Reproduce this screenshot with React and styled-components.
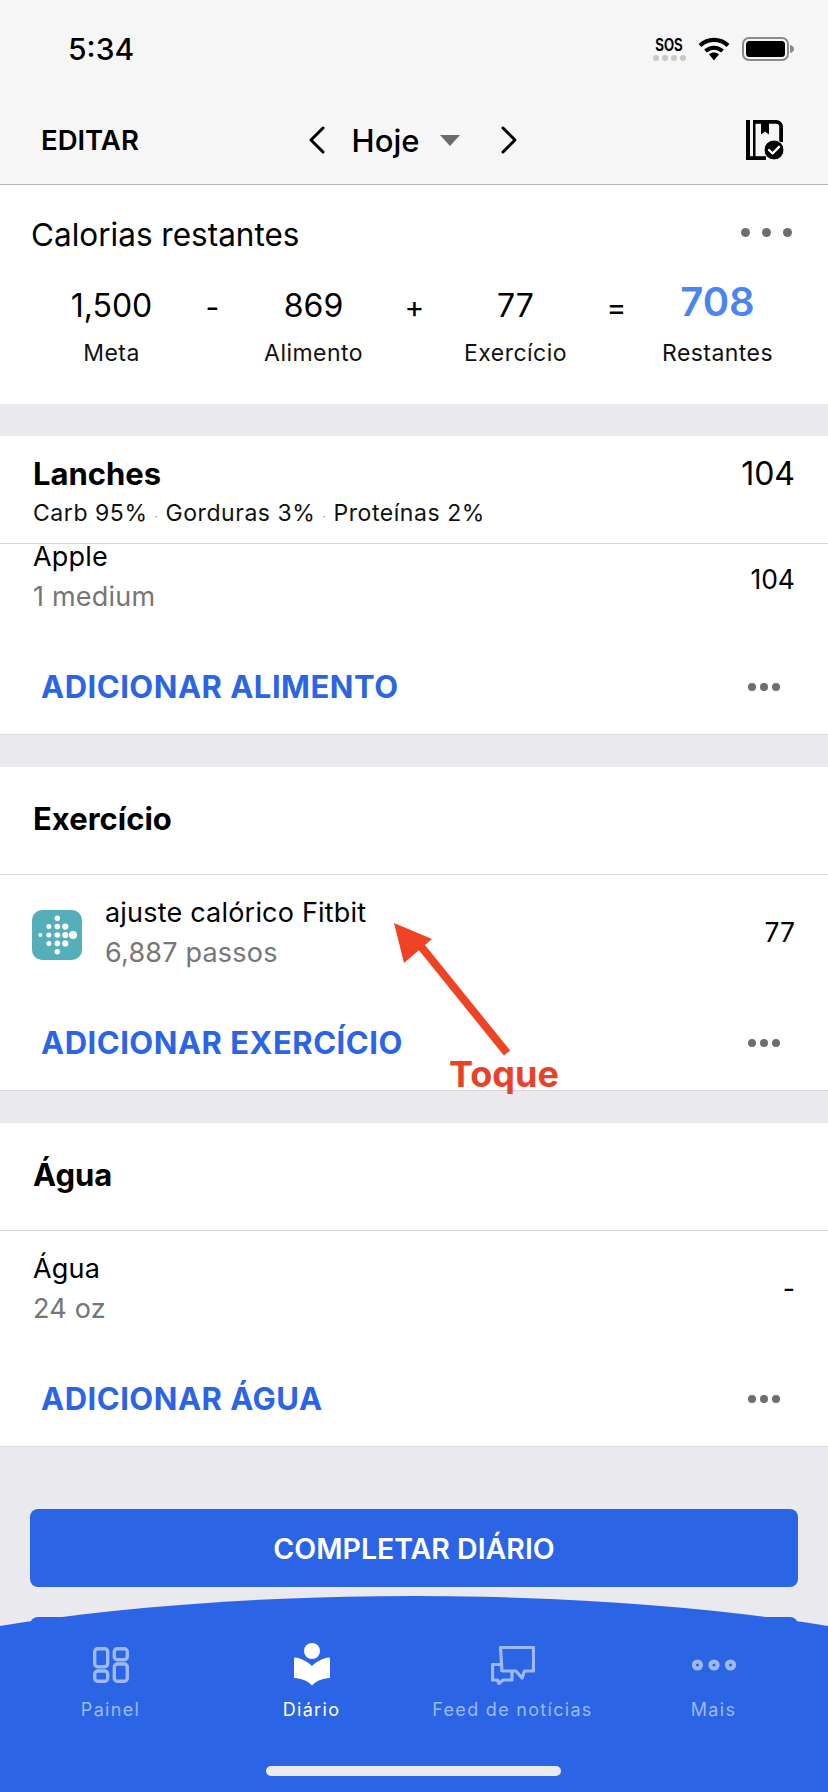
import React from "react";
import styled, { createGlobalStyle } from "styled-components";

const Global = createGlobalStyle`
  html, body { margin: 0; padding: 0; background: #e9e9ee; }
  * { box-sizing: border-box; }
  body { font-family: Inter, "Liberation Sans", sans-serif; color: #000; }
`;

const BLUE = "#2b65e6";

const Page = styled.div`
  position: relative;
  width: 828px;
  height: 1792px;
  overflow: hidden;
  background: #e9e9ee;
`;

const Top = styled.header`
  height: 185px;
  background: #f6f6f6;
  border-bottom: 1px solid #b4b4b4;
  display: flex;
  flex-direction: column;
`;

const StatusBar = styled.div`
  height: 98px;
  padding: 36px 34px 0 68px;
  display: flex;
  align-items: flex-start;
  justify-content: space-between;
`;

const Clock = styled.span`
  font-size: 30px;
  line-height: 26px;
  font-weight: 500;
`;

const StatusIcons = styled.div`
  display: flex;
  align-items: flex-start;
  gap: 12px;
  margin-top: 1px;
`;

const Sos = styled.div`
  width: 34px;
  display: flex;
  flex-direction: column;
  align-items: center;
  font-family: "Liberation Sans", sans-serif;
  font-size: 18px;
  line-height: 17px;
  font-weight: 700;
`;

const SosText = styled.span`
  display: block;
  transform: scaleX(0.72);
`;

const SosDots = styled.div`
  display: flex;
  gap: 3px;
  margin-top: 1px;
`;

const SosDot = styled.i`
  display: block;
  width: 6px;
  height: 6px;
  border-radius: 50%;
  background: #c9c9c9;
`;

const NavBar = styled.nav`
  flex: 1;
  display: grid;
  grid-template-columns: 1fr auto 1fr;
  align-items: center;
  padding: 0 43px 0 41px;
  margin-top: -2px;
`;

const EditLink = styled.span`
  font-size: 27.5px;
  font-weight: 600;
`;

const DatePicker = styled.div`
  display: flex;
  align-items: center;
`;

const DateLabel = styled.span`
  font-size: 31px;
  font-weight: 500;
  margin: 0 21px 0 26px;
`;

const Caret = styled.i`
  display: block;
  width: 0;
  height: 0;
  border-left: 10px solid transparent;
  border-right: 10px solid transparent;
  border-top: 11px solid #6b6b6b;
  margin-right: 40px;
`;

const DiaryIconWrap = styled.div`
  justify-self: end;
  display: flex;
`;

const Card = styled.section`
  background: #fff;
  margin-bottom: ${(p) => (p.$last ? 0 : 32)}px;
  border-bottom: ${(p) => (p.$flat ? "none" : "1px solid #d8d8d8")};
`;

const SummaryCard = styled(Card)`
  height: 219px;
  padding: 32px 0 0;
`;

const SummaryHead = styled.div`
  display: flex;
  justify-content: space-between;
  align-items: center;
  padding: 0 36px 0 31px;
`;

const SummaryTitle = styled.h2`
  margin: 0;
  font-size: 31.5px;
  line-height: 36px;
  font-weight: 400;
`;

const GrayDots = styled.div`
  display: flex;
  gap: ${(p) => p.$gap}px;
  margin-top: ${(p) => p.$top || 0}px;
`;

const GrayDot = styled.i`
  display: block;
  width: ${(p) => p.$size}px;
  height: ${(p) => p.$size}px;
  border-radius: 50%;
  background: #6e6e6e;
`;

const Equation = styled.div`
  margin-top: 35px;
  padding-left: 61px;
  display: grid;
  grid-template-columns: repeat(7, 101px);
`;

const Stat = styled.div`
  width: 101px;
  display: flex;
  flex-direction: column;
  align-items: center;
  white-space: nowrap;
`;

const Operator = styled.div`
  font-size: 30px;
  line-height: 36px;
  text-align: center;
  margin-top: 1px;
`;

const StatValue = styled.div`
  font-size: ${(p) => (p.$accent ? 40 : 32)}px;
  font-weight: ${(p) => (p.$accent ? 600 : 400)};
  color: ${(p) => (p.$accent ? "#4a86f2" : "#000")};
  line-height: ${(p) => (p.$accent ? 28 : 36)}px;
  margin-bottom: ${(p) => (p.$accent ? 8 : 0)}px;
`;

const StatLabel = styled.div`
  margin-top: 12px;
  font-size: 23px;
  line-height: 34px;
  letter-spacing: 0.45px;
  color: #111;
`;

const MealHead = styled.div`
  padding: 20px 33px 15px;
  border-bottom: 1px solid #d8d8d8;
`;

const MealTop = styled.div`
  display: flex;
  justify-content: space-between;
  align-items: center;
`;

const SectionTitle = styled.h3`
  margin: 0;
  font-size: 31px;
  line-height: 36px;
  font-weight: 700;
`;

const MealTotal = styled.span`
  font-size: 32px;
  line-height: 36px;
`;

const Macros = styled.div`
  margin-top: 6px;
  height: 30px;
  font-size: 23px;
  line-height: 30px;
  letter-spacing: 0.55px;
  color: #111;
`;

const MacroSep = styled.span`
  color: #999;
  font-size: 12px;
  margin: 0 7px;
`;

const PlainHead = styled.div`
  height: 108px;
  padding: 0 33px 4px;
  display: flex;
  align-items: center;
  border-bottom: 1px solid #d8d8d8;
`;

const Entry = styled.div`
  display: flex;
  align-items: center;
  height: ${(p) => (p.$tight ? 124 : 149)}px;
  padding: ${(p) => (p.$tight ? 1 : 21)}px 33px 0;
`;

const EntryBody = styled.div`
  display: flex;
  align-items: center;
  width: 100%;
  align-self: flex-start;
`;

const EntryText = styled.div`
  flex: 1;
  display: flex;
  flex-direction: column;
`;

const EntryName = styled.div`
  font-size: 27px;
  letter-spacing: 0.2px;
  line-height: ${(p) => (p.$tight ? 24 : 34)}px;
`;

const EntryDetail = styled.div`
  margin-top: ${(p) => (p.$tight ? 11 : 6)}px;
  font-size: 27px;
  letter-spacing: 0.2px;
  line-height: 34px;
  color: #767676;
`;

const EntryValue = styled.div`
  font-size: 26.5px;
  padding-bottom: 2px;
`;

const AppBadge = styled.div`
  width: 50px;
  height: 50px;
  border-radius: 10px;
  background: #55afb9;
  margin: 3px 23px 0 -1px;
  flex: none;
  display: flex;
  align-items: center;
  justify-content: center;
`;

const ActionRow = styled.div`
  display: flex;
  justify-content: space-between;
  align-items: center;
  padding: 1px 48px 29px 41px;
`;

const ActionLink = styled.span`
  font-size: 31px;
  line-height: 36px;
  font-weight: 700;
  color: ${BLUE};
  letter-spacing: 0.5px;
`;

const Buttons = styled.div`
  padding: 62px 30px 0;
  display: flex;
  flex-direction: column;
  gap: 30px;
`;

const PrimaryButton = styled.div`
  height: 78px;
  border-radius: 8px;
  background: ${BLUE};
  color: #fff;
  font-size: 28.5px;
  font-weight: 600;
  display: flex;
  align-items: center;
  justify-content: center;
`;

const TabBar = styled.nav`
  position: absolute;
  left: 0;
  right: 0;
  bottom: 0;
  height: 196px;
  overflow: hidden;
  &::before {
    content: "";
    position: absolute;
    top: 0;
    left: 50%;
    width: 1400px;
    height: 310px;
    margin-left: -700px;
    border-radius: 50%;
    background: ${BLUE};
  }
`;

const Tabs = styled.div`
  position: relative;
  display: grid;
  grid-template-columns: repeat(4, 201px);
  padding: 46px 0 0 10px;
`;

const Tab = styled.div`
  display: flex;
  flex-direction: column;
  align-items: center;
  color: ${(p) => (p.$active ? "#fff" : "#9dbaf5")};
`;

const TabIcon = styled.div`
  height: 46px;
  display: flex;
  align-items: center;
  justify-content: center;
`;

const TabLabel = styled.span`
  margin-top: 10px;
  font-size: 18px;
  line-height: 24px;
  letter-spacing: 1.3px;
  white-space: nowrap;
`;

const HomeBar = styled.div`
  position: absolute;
  left: 266px;
  bottom: 16px;
  width: 295px;
  height: 10px;
  border-radius: 5px;
  background: #ebebed;
`;

const Note = styled.div`
  position: absolute;
  left: 0;
  top: 0;
  pointer-events: none;
`;

const NoteArrow = styled.svg`
  position: absolute;
  left: 385px;
  top: 915px;
`;

const NoteLabel = styled.span`
  position: absolute;
  left: 449px;
  top: 1052px;
  font-size: 36px;
  line-height: 44px;
  font-weight: 700;
  color: #e8432a;
`;

const Wifi = () => (
  <svg width="32" height="24" viewBox="0 0 32 24">
    <path d="M2 8.5C10 1 22 1 30 8.5" fill="none" stroke="#000" strokeWidth="4.2" />
    <path d="M7.5 14C12.5 9.6 19.5 9.6 24.5 14" fill="none" stroke="#000" strokeWidth="4" />
    <path d="M11 17.2C14 14.8 18 14.8 21 17.2L16 23.5Z" fill="#000" />
  </svg>
);

const Battery = () => (
  <svg width="52" height="24" viewBox="0 0 52 24">
    <rect x="1" y="1" width="45" height="22" rx="6" fill="none" stroke="#8a8a8a" strokeWidth="2" />
    <rect x="4" y="4" width="39" height="16" rx="3.5" fill="#000" />
    <path d="M48 8C50.5 8.5 52 10 52 12C52 14 50.5 15.5 48 16Z" fill="#8a8a8a" />
  </svg>
);

const Chevron = ({ flip }) => (
  <svg width="18" height="28" viewBox="0 0 18 28">
    <path
      d={flip ? "M3 2L15 14L3 26" : "M15 2L3 14L15 26"}
      fill="none"
      stroke="#000"
      strokeWidth="3"
      strokeLinecap="round"
      strokeLinejoin="round"
    />
  </svg>
);

const DiaryIcon = () => (
  <svg width="39" height="40" viewBox="0 0 39 40">
    <path d="M0 0H4V40H0Z" fill="#000" />
    <path d="M7 0H9.5V40H7Z" fill="#000" />
    <path d="M7 0H30C34 0 37 3 37 7V22H33.2V7C33.2 5 32 3.8 30 3.8H23V14.5L19 11.5L15 14.5V3.8H7Z" fill="#000" />
    <path d="M0 36.2H20V40H0Z" fill="#000" />
    <circle cx="28" cy="30" r="10" fill="#000" stroke="#f6f6f6" strokeWidth="1" />
    <path d="M23 30L26.6 33.5L33 26.8" fill="none" stroke="#fff" strokeWidth="2.4" strokeLinecap="round" strokeLinejoin="round" />
  </svg>
);

const FITBIT_DOTS = [
  [2.4, 20, 2],
  [10.8, 11.6, 2.5], [10.8, 20, 2.5], [10.8, 28.4, 2.5],
  [19.3, 3.2, 2.7], [19.3, 11.6, 2.8], [19.3, 20, 2.8], [19.3, 28.4, 2.8], [19.3, 36.8, 2.7],
  [27.3, 11.6, 3.1], [27.3, 20, 3.1], [27.3, 28.4, 3.1],
  [35, 20, 4],
];

const FitbitMark = () => (
  <svg width="39" height="40" viewBox="0 0 39 40">
    {FITBIT_DOTS.map(([x, y, r]) => (
      <circle key={`${x}-${y}`} cx={x} cy={y} r={r} fill="#fff" />
    ))}
  </svg>
);

const PanelIcon = () => (
  <svg width="36" height="36" viewBox="0 0 36 36" fill="none" stroke="currentColor" strokeWidth="3.4">
    <rect x="1.7" y="1.7" width="13" height="18" rx="3" />
    <rect x="21.3" y="1.7" width="13" height="11" rx="3" />
    <rect x="1.7" y="24" width="13" height="10.3" rx="3" />
    <rect x="21.3" y="17" width="13" height="17.3" rx="3" />
  </svg>
);

const ReaderIcon = () => (
  <svg width="36" height="44" viewBox="0 0 36 44" fill="currentColor">
    <circle cx="18" cy="8" r="8" />
    <path d="M1 14.5C7 15 14 19 18 23C22 19 29 15 35 14.5Q36 14.5 36 16V35C28 35.5 22 38 18 42.5C14 38 8 35.5 0 35V16Q0 14.5 1 14.5Z" />
  </svg>
);

const FeedIcon = () => (
  <svg width="44" height="39" viewBox="0 0 44 39" fill="none" stroke="currentColor" strokeWidth="3.2" strokeLinejoin="round">
    <path d="M11 26L9.5 1.5H42.5V25H33.5L31 32L25 25H11" />
    <path d="M10 18.5H1.5V34H6.5L8 37.5L12 34H21V26" />
  </svg>
);

const MoreIcon = () => (
  <svg width="44" height="12" viewBox="0 0 44 12" fill="none" stroke="currentColor" strokeWidth="4">
    <circle cx="5.5" cy="6" r="3.6" />
    <circle cx="22" cy="6" r="3.6" />
    <circle cx="38.5" cy="6" r="3.6" />
  </svg>
);

const Dots = ({ size, gap, top }) => (
  <GrayDots $gap={gap} $top={top}>
    <GrayDot $size={size} />
    <GrayDot $size={size} />
    <GrayDot $size={size} />
  </GrayDots>
);

const Action = ({ children }) => (
  <ActionRow>
    <ActionLink>{children}</ActionLink>
    <Dots size={8} gap={4} />
  </ActionRow>
);

const StatBlock = ({ value, label, accent }) => (
  <Stat>
    <StatValue $accent={accent}>{value}</StatValue>
    <StatLabel>{label}</StatLabel>
  </Stat>
);

const TABS = [
  { label: "Painel", icon: <PanelIcon /> },
  { label: "Diário", icon: <ReaderIcon />, active: true },
  { label: "Feed de notícias", icon: <FeedIcon /> },
  { label: "Mais", icon: <MoreIcon /> },
];

export default function App() {
  return (
    <Page>
      <Global />
      <Top>
        <StatusBar>
          <Clock>5:34</Clock>
          <StatusIcons>
            <Sos>
              <SosText>SOS</SosText>
              <SosDots>
                <SosDot />
                <SosDot />
                <SosDot />
                <SosDot />
              </SosDots>
            </Sos>
            <Wifi />
            <Battery />
          </StatusIcons>
        </StatusBar>
        <NavBar>
          <EditLink>EDITAR</EditLink>
          <DatePicker>
            <Chevron />
            <DateLabel>Hoje</DateLabel>
            <Caret />
            <Chevron flip />
          </DatePicker>
          <DiaryIconWrap>
            <DiaryIcon />
          </DiaryIconWrap>
        </NavBar>
      </Top>

      <SummaryCard $flat>
        <SummaryHead>
          <SummaryTitle>Calorias restantes</SummaryTitle>
          <Dots size={9} gap={12} top={-6} />
        </SummaryHead>
        <Equation>
          <StatBlock value="1,500" label="Meta" />
          <Operator>-</Operator>
          <StatBlock value="869" label="Alimento" />
          <Operator>+</Operator>
          <StatBlock value="77" label="Exercício" />
          <Operator>=</Operator>
          <StatBlock value="708" label="Restantes" accent />
        </Equation>
      </SummaryCard>

      <Card>
        <MealHead>
          <MealTop>
            <SectionTitle>Lanches</SectionTitle>
            <MealTotal>104</MealTotal>
          </MealTop>
          <Macros>
            Carb 95%<MacroSep>·</MacroSep>Gorduras 3%<MacroSep>·</MacroSep>Proteínas 2%
          </Macros>
        </MealHead>
        <Entry $tight>
          <EntryBody>
            <EntryText>
              <EntryName $tight>Apple</EntryName>
              <EntryDetail $tight>1 medium</EntryDetail>
            </EntryText>
            <EntryValue>104</EntryValue>
          </EntryBody>
        </Entry>
        <Action>ADICIONAR ALIMENTO</Action>
      </Card>

      <Card>
        <PlainHead>
          <SectionTitle>Exercício</SectionTitle>
        </PlainHead>
        <Entry>
          <EntryBody>
            <AppBadge>
              <FitbitMark />
            </AppBadge>
            <EntryText>
              <EntryName>ajuste calórico Fitbit</EntryName>
              <EntryDetail>6,887 passos</EntryDetail>
            </EntryText>
            <EntryValue>77</EntryValue>
          </EntryBody>
        </Entry>
        <Action>ADICIONAR EXERCÍCIO</Action>
      </Card>

      <Card $last>
        <PlainHead>
          <SectionTitle>Água</SectionTitle>
        </PlainHead>
        <Entry>
          <EntryBody>
            <EntryText>
              <EntryName>Água</EntryName>
              <EntryDetail>24 oz</EntryDetail>
            </EntryText>
            <EntryValue>-</EntryValue>
          </EntryBody>
        </Entry>
        <Action>ADICIONAR ÁGUA</Action>
      </Card>

      <Buttons>
        <PrimaryButton>COMPLETAR DIÁRIO</PrimaryButton>
        <PrimaryButton />
      </Buttons>

      <Note>
        <NoteArrow width="130" height="145" viewBox="0 0 130 145">
          <path d="M122 138L30 24" fill="none" stroke="#ee4325" strokeWidth="8" />
          <path d="M9 8L47 24L19 48Z" fill="#ee4325" />
        </NoteArrow>
        <NoteLabel>Toque</NoteLabel>
      </Note>

      <TabBar>
        <Tabs>
          {TABS.map((t) => (
            <Tab key={t.label} $active={t.active}>
              <TabIcon>{t.icon}</TabIcon>
              <TabLabel>{t.label}</TabLabel>
            </Tab>
          ))}
        </Tabs>
        <HomeBar />
      </TabBar>
    </Page>
  );
}
